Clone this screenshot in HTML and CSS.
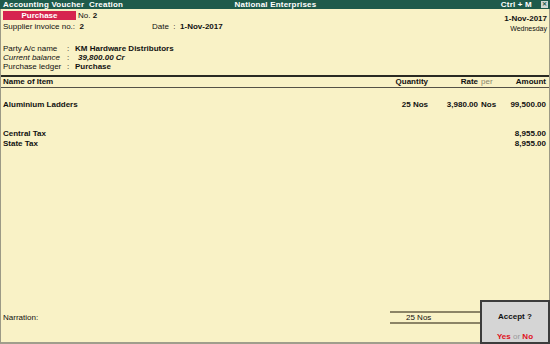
FILE: index.html
```html
<!DOCTYPE html>
<html lang="en">

<head>
    <title>Accounting Voucher Creation</title>
    <link rel="stylesheet" href="styles.css">
</head>

<body>
    <div class="titlebar">
        <span class="title-left">Accounting Voucher &nbsp;Creation</span>
        <span class="title-center">National Enterprises</span>
        <span class="title-right">Ctrl + M <span class="close-box">&#x2715;</span></span>
    </div>

    <div class="screen">
        <div class="voucher-head">
            <div class="head-left">
                <div class="head-row">
                    <span class="vch-type">Purchase</span>
                    <span>No. <b>2</b></span>
                </div>
                <div class="head-row">
                    <span class="supplier">Supplier invoice no.: &nbsp;<b>2</b></span>
                    <span class="date">Date &nbsp;: &nbsp;<b>1-Nov-2017</b></span>
                </div>
            </div>
            <div class="head-right">
                <div class="vch-date">1-Nov-2017</div>
                <div class="vch-day">Wednesday</div>
            </div>
        </div>

        <div class="party">
            <div class="party-row"><span>Party A/c name</span><span>:</span><b>KM Hardware Distributors</b></div>
            <div class="party-row"><i>Current balance</i><span>:</span><b class="balance">39,800.00 Cr</b></div>
            <div class="party-row"><span>Purchase ledger</span><span>:</span><b>Purchase</b></div>
        </div>

        <div class="items-head item-grid">
            <span>Name of Item</span>
            <span class="num">Quantity</span>
            <span class="num">Rate</span>
            <span class="per">per</span>
            <span class="num">Amount</span>
        </div>

        <div class="item-grid item-row">
            <span>Aluminium Ladders</span>
            <span class="num">25 Nos</span>
            <span class="num">3,980.00</span>
            <span class="per-val">Nos</span>
            <span class="num">99,500.00</span>
        </div>

        <div class="taxes">
            <div class="item-grid">
                <span>Central Tax</span><span></span><span></span><span></span>
                <span class="num">8,955.00</span>
            </div>
            <div class="item-grid">
                <span>State Tax</span><span></span><span></span><span></span>
                <span class="num">8,955.00</span>
            </div>
        </div>

        <div class="footer">
            <span class="narration">Narration:</span>
            <div class="total-qty">25 Nos</div>
        </div>

        <div class="accept-box">
            <div class="accept-title">Accept ?</div>
            <div class="accept-choice"><b>Yes</b> <span>or</span> <b>No</b></div>
        </div>
    </div>
</body>

</html>
```

FILE: styles.css
```css
:root {
    --bg-color: #f9f2c6;
    --bar-color: #1f5b4b;
    --font-color: #111;
}

body {
    font-family: 'Liberation Sans', Arial, sans-serif;
    font-size: 8px;
    margin: 0;
    padding: 0;
    width: 550px;
    height: 344px;
    overflow: hidden;
    background-color: var(--bg-color);
    color: var(--font-color);
}

.titlebar {
    display: grid;
    grid-template-columns: 1fr auto 1fr;
    align-items: center;
    height: 9px;
    padding: 0 2px 0 3px;
    background-color: var(--bar-color);
    color: #fff;
    font-weight: bold;
    font-size: 8px;
    line-height: 9px;
    letter-spacing: 0.2px;
    white-space: nowrap;
}

.title-right {
    justify-self: end;
    display: flex;
    align-items: center;
    gap: 9px;
}

.close-box {
    display: inline-flex;
    align-items: center;
    justify-content: center;
    width: 7px;
    height: 7px;
    background-color: #cfd8d2;
    font-size: 6px;
    line-height: 7px;
    letter-spacing: 0;
    color: #1f5b4b;
}

.screen {
    position: relative;
    display: flex;
    flex-direction: column;
    height: 333px;
    border-left: 1px solid #9c9a86;
    border-right: 1px solid #9c9a86;
    border-bottom: 2px solid #a09e8c;
    white-space: nowrap;
}

.voucher-head {
    display: flex;
    justify-content: space-between;
    padding: 2px 2px 0 2px;
}

.head-row {
    display: flex;
    align-items: center;
    height: 9px;
    margin-bottom: 2px;
}

.vch-type {
    width: 73px;
    margin-right: 2px;
    background-color: #d6244f;
    color: #fff;
    font-weight: bold;
    text-align: center;
    line-height: 9px;
}

.supplier {
    width: 149px;
}

.head-right {
    text-align: right;
    padding-top: 3px;
}

.vch-date {
    font-weight: bold;
    line-height: 10px;
}

.vch-day {
    font-size: 7px;
    line-height: 10px;
}

.party {
    margin-top: 10px;
    padding-left: 2px;
}

.party-row {
    display: grid;
    grid-template-columns: 64px 8px auto;
    line-height: 9px;
}

.balance {
    padding-left: 3px;
    font-style: italic;
}

.item-grid {
    display: grid;
    grid-template-columns: 1fr 60px 50px 18px 50px;
    padding: 0 3px 0 2px;
    line-height: 10px;
}

.items-head {
    margin-top: 4px;
    border-top: 2px solid #2a2a22;
    border-bottom: 1px solid #555246;
    font-weight: bold;
}

.num {
    text-align: right;
}

.per {
    padding-left: 3px;
    font-weight: normal;
    color: #8a866c;
}

.per-val {
    padding-left: 3px;
}

.item-row {
    margin-top: 12px;
    font-weight: bold;
}

.taxes {
    margin-top: 19px;
    font-weight: bold;
}

.footer {
    margin-top: auto;
    display: flex;
    justify-content: space-between;
    align-items: center;
    padding: 0 69px 18px 2px;
}

.total-qty {
    width: 74px;
    padding-left: 16px;
    border-top: 2px solid #8c8466;
    border-bottom: 2px solid #8c8466;
    line-height: 9px;
}

.accept-box {
    position: absolute;
    right: -1px;
    bottom: -2px;
    width: 66px;
    height: 40px;
    border: 2px solid #3c3c3c;
    background-color: #d5d5d5;
    text-align: center;
}

.accept-title {
    margin-top: 10px;
    line-height: 10px;
    font-weight: bold;
}

.accept-choice {
    margin-top: 10px;
    line-height: 10px;
    color: #e0101c;
}

.accept-choice span {
    color: #9a9a9a;
}
```
